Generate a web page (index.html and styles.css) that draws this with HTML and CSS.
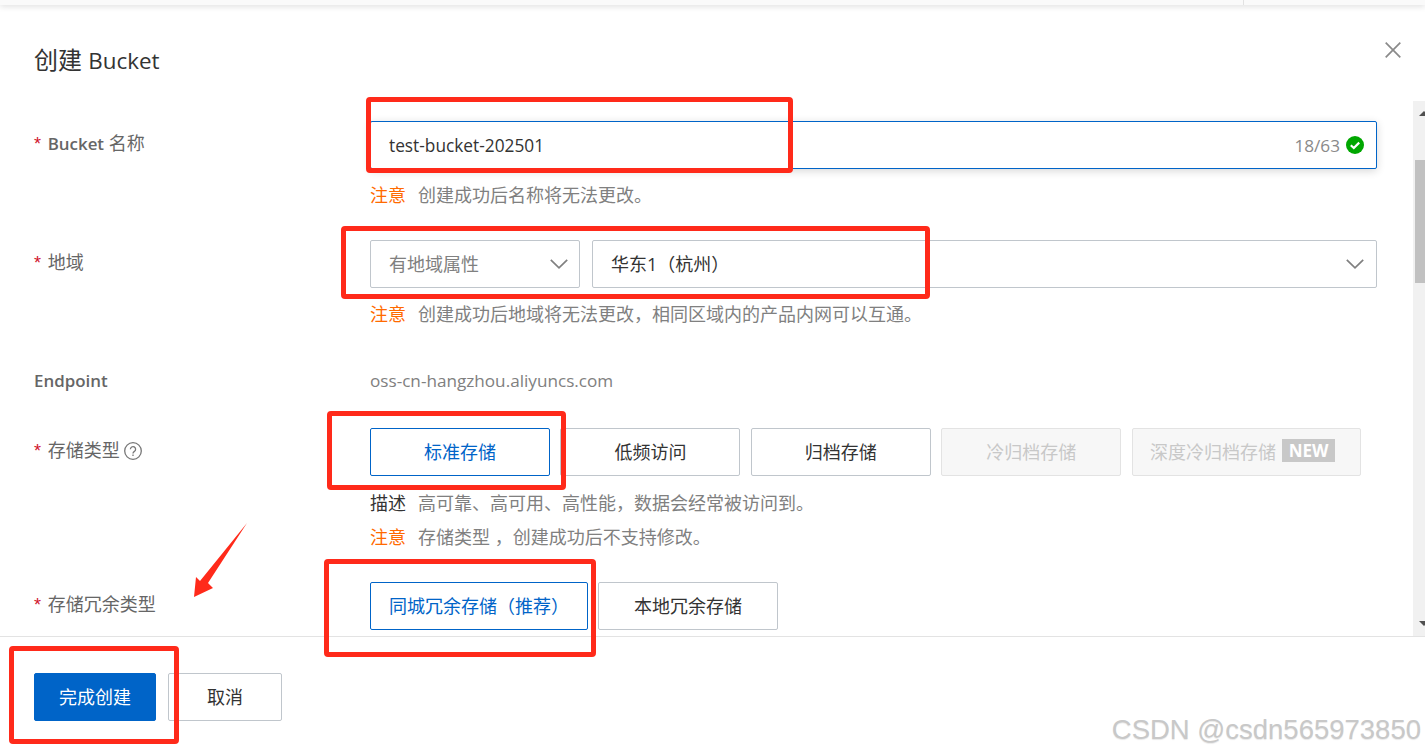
FILE: index.html
```html
<!DOCTYPE html>
<html lang="zh-CN">
<head>
<meta charset="utf-8">
<title>创建 Bucket</title>
<link rel="stylesheet" href="styles.css">
</head>
<body>
<div class="page">
  <div class="topstrip"><div class="topstrip-fill"></div><div class="topstrip-cell"></div></div>
  <header class="head">
    <h1 class="title">创建 <span class="title-lat">Bucket</span></h1>
    <svg class="close" viewBox="0 0 16 16" width="16" height="16"><path d="M.7.7l14.6 14.6M15.3.7L.7 15.3" fill="none" stroke="#8a8a8a" stroke-width="1.7"/></svg>
  </header>
  <div class="middle">
    <main class="form">
      <section class="row">
        <div class="label"><i class="req">*</i> <b>Bucket</b> 名称</div>
        <div class="field">
          <div class="input focused">
            <span class="input-text lat">test-bucket-202501</span>
            <span class="count">18/63</span>
            <svg class="ok" viewBox="0 0 18 18" width="18" height="18"><circle cx="9" cy="9" r="9" fill="#00a700"/><path d="M4.8 9.2l3 2.8 5.4-5.4" fill="none" stroke="#fff" stroke-width="2.2"/></svg>
          </div>
          <p class="note"><em class="warn">注意</em>创建成功后名称将无法更改。</p>
        </div>
      </section>
      <section class="row">
        <div class="label"><i class="req">*</i> 地域</div>
        <div class="field">
          <div class="selects">
            <div class="input select-small"><span class="muted-value">有地域属性</span><svg class="chev" viewBox="0 0 18 10" width="18" height="10"><path d="M.8.8L9 8.8 17.2.8" fill="none" stroke="#808080" stroke-width="1.7"/></svg></div>
            <div class="input select-wide"><span class="input-text">华东1（杭州）</span><svg class="chev" viewBox="0 0 18 10" width="18" height="10"><path d="M.8.8L9 8.8 17.2.8" fill="none" stroke="#808080" stroke-width="1.7"/></svg></div>
          </div>
          <p class="note"><em class="warn">注意</em>创建成功后地域将无法更改，相同区域内的产品内网可以互通。</p>
        </div>
      </section>
      <section class="row row-endpoint">
        <div class="label label-flat"><b>Endpoint</b></div>
        <div class="field endpoint">oss-cn-hangzhou.aliyuncs.com</div>
      </section>
      <section class="row row-storage">
        <div class="label"><i class="req">*</i> 存储类型 <svg class="help" viewBox="0 0 18 18" width="18" height="18"><circle cx="9" cy="9" r="8.300" fill="none" stroke="#777" stroke-width="1.300"/><path d="M6.400 7.200a2.600 2.600 0 1 1 4 2.200c-.9.600-1.400 1-1.400 2.100M9 12.600v1.500" fill="none" stroke="#777" stroke-width="1.300"/></svg></div>
        <div class="field">
          <div class="options options-wide">
            <button class="opt active">标准存储</button>
            <button class="opt">低频访问</button>
            <button class="opt">归档存储</button>
            <button class="opt off">冷归档存储</button>
            <button class="opt off opt-deep">深度冷归档存储<span class="new">NEW</span></button>
          </div>
          <p class="note note-desc"><em class="desc-key">描述</em>高可靠、高可用、高性能，数据会经常被访问到。</p>
          <p class="note note-tight"><em class="warn">注意</em>存储类型 ，创建成功后不支持修改。</p>
        </div>
      </section>
      <section class="row">
        <div class="label"><i class="req">*</i> 存储冗余类型</div>
        <div class="field">
          <div class="options">
            <button class="opt active opt-auto">同城冗余存储（推荐）</button>
            <button class="opt">本地冗余存储</button>
          </div>
        </div>
      </section>
    </main>
    <aside class="scrollbar"><div class="thumb"></div><span class="arrow up"></span><span class="arrow down"></span></aside>
  </div>
  <footer class="foot">
    <button class="btn primary">完成创建</button>
    <button class="btn">取消</button>
  </footer>
  <div class="mark m1"></div>
  <div class="mark m2"></div>
  <div class="mark m3"></div>
  <div class="mark m4"></div>
  <div class="mark m5"></div>
  <svg class="pointer" viewBox="0 0 60 80" width="60" height="80"><polygon points="54,1 15,61 20,66 1,75 3,55 7,59" fill="#ff2a1a"/></svg>
  <div class="watermark">CSDN @csdn565973850</div>
</div>
</body>
</html>
```

FILE: styles.css
```css
* { box-sizing: border-box; }
html, body { margin: 0; height: 100%; background: #fff; }
body { font-family: "Open Sans", "Noto Sans CJK SC", sans-serif; font-size: 18px; color: #333; overflow: hidden; }
.page { position: relative; width: 1425px; height: 756px; display: flex; flex-direction: column; overflow: hidden; }

.topstrip { height: 5px; display: flex; box-shadow: 0 1px 6px rgba(0,0,0,.16); background: #fafafa; flex: none; }
.topstrip-fill { width: 1243px; }
.topstrip-cell { flex: 1; border-left: 1px solid #e2e2e2; }

.head { height: 96px; flex: none; display: flex; justify-content: space-between; padding: 41px 24px 0 34px; }
.title { margin: 0; font-size: 24px; line-height: 28px; font-weight: 400; color: #333; }
.title-lat { font-size: 22.4px; }
.close { margin-top: -4px; }

.middle { height: 535px; flex: none; display: flex; }
.form { flex: 1; padding-top: 20px; overflow: hidden; }
.row { display: flex; margin-bottom: 33px; }
.row-endpoint { margin-bottom: 35px; margin-top: 44px; }
.label { width: 370px; flex: none; padding: 10px 0 0 34px; line-height: 24px; color: #666; }
.label-flat { padding-top: 0; margin-top: -2px; }
.label b { font-weight: 600; font-size: 16.9px; }
.req { font-style: normal; font-family: "Liberation Sans", sans-serif; color: #d0122c; font-size: 18px; margin-right: 2px; }
.help { vertical-align: -3px; }
.field { width: 1007px; flex: none; }
.endpoint { line-height: 24px; font-size: 17.15px; color: #808080; margin-top: -1px; }

.input { height: 48px; border: 1px solid #c0c6cc; border-radius: 2px; display: flex; align-items: center; padding: 0 12px 0 18px; background: #fff; }
.input.focused { border-color: #0064c8; box-shadow: 0 2px 8px rgba(0,0,0,.16); }
.input-text { flex: 1; color: #333; }
.selects .input { padding-bottom: 2px; }
.selects .chev { margin-top: 2px; }
.lat { font-size: 17.3px; }
.muted-value { flex: 1; color: #808080; }
.count { color: #8a8a8a; font-size: 17.2px; margin-right: 6px; }
.selects { display: flex; gap: 12px; }
.select-small { width: 210px; flex: none; padding-right: 11px; }
.select-wide { flex: 1; padding-right: 12px; }
.chev { flex: none; }

.note { margin: 15px 0 0; line-height: 23px; color: #808080; }
.note-desc { margin-top: 16px; }
.note-tight { margin-top: 11px; }
.note em { font-style: normal; margin-right: 12px; }
.warn { color: #ff6a00; }
.desc-key { color: #333; }

.row-storage { margin-bottom: 33px; }
.options { display: flex; gap: 10px; }
.options-wide { gap: 10.4px; }
.opt { width: 180px; height: 48px; flex: none; font: inherit; background: #fff; border: 1px solid #c0c6cc; border-radius: 2px; color: #333; padding: 0 0 3px; display: flex; align-items: center; justify-content: center; }
.opt.active { border-color: #0064c8; color: #0064c8; }
.opt-auto { width: 218px; }
.opt.off { background: #f7f7f7; border-color: #e3e3e3; color: #c8c8c8; }
.opt-deep { width: 229px; padding-right: 7px; }
.new { background: #c8c8c8; color: #fff; font-weight: 700; font-size: 17px; line-height: 23px; height: 23px; width: 53px; margin-left: 6px; display: block; text-align: center; }

.scrollbar { position: relative; width: 12px; flex: none; background: #f1f1f1; padding: 59px 0 0 2px; }
.thumb { height: 123px; background: #c1c1c1; }
.arrow { position: absolute; left: 6px; width: 0; height: 0; border-left: 5px solid transparent; border-right: 5px solid transparent; }
.arrow.up { top: 10px; border-bottom: 5px solid #505050; }
.arrow.down { bottom: 10px; border-top: 5px solid #505050; }

.foot { flex: 1; border-top: 1px solid #e3e3e3; padding: 36px 0 0 34px; display: flex; gap: 12px; align-items: flex-start; }
.btn { width: 114px; height: 48px; font: inherit; color: #333; background: #fff; border: 1px solid #c0c6cc; border-radius: 2px; padding: 0 0 2px; }
.btn.primary { width: 122px; background: #0064c8; border-color: #0064c8; color: #fff; }

.mark { position: absolute; border: 5px solid #ff2a1a; border-radius: 4px; }
.m1 { left: 366px; top: 97px; width: 427px; height: 76px; }
.m2 { left: 341px; top: 226px; width: 589px; height: 73px; }
.m3 { left: 327px; top: 411px; width: 239px; height: 79px; }
.m4 { left: 324px; top: 559px; width: 272px; height: 98px; }
.m5 { left: 9px; top: 646px; width: 170px; height: 98px; }
.pointer { position: absolute; left: 193px; top: 522px; }
.watermark { position: absolute; right: 4px; top: 714px; font-family: "Liberation Sans", sans-serif; font-size: 27.5px; line-height: 32px; color: #c8c8c8; text-shadow: 0 1px 1px #e8e8e8; white-space: nowrap; }
```
